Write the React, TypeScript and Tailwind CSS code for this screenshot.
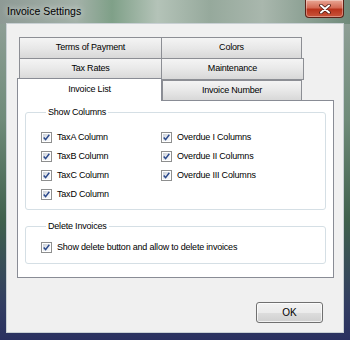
import React from "react";

const checkRowsLeft = ["TaxA Column", "TaxB Column", "TaxC Column", "TaxD Column"];
const checkRowsRight = ["Overdue I Columns", "Overdue II Columns", "Overdue III Columns"];

function Check() {
  return (
    <span className="flex w-[11px] h-[11px] shrink-0 border border-[#8e8f8f] bg-white p-px">
      <span className="flex flex-1 items-center justify-center bg-[linear-gradient(135deg,#c9ced6,#eef0f3_60%,#f8f8f8)]">
        <svg viewBox="0 0 7 7" className="w-[7px] h-[7px]">
          <path d="M0.7 3.5 L2.6 5.6 L6.3 0.8" fill="none" stroke="#2c4a8c" strokeWidth="1.5" />
        </svg>
      </span>
    </span>
  );
}

function CheckRow({ label }: { label: string }) {
  return (
    <div className="flex h-[19px] items-center gap-[5px]">
      <Check />
      <span>{label}</span>
    </div>
  );
}

function Tab({ label, className }: { label: string; className: string }) {
  return (
    <div
      className={
        "flex items-center justify-center border border-[#8c8e94] bg-[linear-gradient(#f4f4f4,#e8e8e8_50%,#d8d8d8)] " +
        className
      }
    >
      {label}
    </div>
  );
}

export default function App() {
  return (
    <div className="relative w-[350px] h-[340px] overflow-hidden bg-[linear-gradient(180deg,#95a39c_0%,#6f8b79_35%,#3f604c_65%,#323d62_90%,#2a3060_100%)] font-['Liberation_Sans',Arial,sans-serif] text-[9px] tracking-[-0.2px] text-black">
      {/* title bar */}
      <div className="flex h-[24px] items-center pl-[7px] bg-[linear-gradient(90deg,#8e9a95_0%,#a3b1a8_22%,#7fa088_32%,#b4c3b8_45%,#96a99c_60%,#a9b7ad_75%,#6f8a7a_100%)]">
        <span className="text-[10.5px] tracking-normal [text-shadow:0_0_6px_rgba(255,255,255,0.9)]">Invoice Settings</span>
      </div>
      <div className="absolute top-0 right-[6px] flex w-[39px] h-[18px] items-center justify-center rounded-b-[4px] border border-t-0 border-[#5b2016] bg-[linear-gradient(#e9a796_0%,#d46a55_45%,#b9331c_55%,#c9553b_100%)] shadow-[inset_0_0_0_1px_rgba(255,255,255,0.35)]">
        <svg viewBox="0 0 12 10" className="w-[12px] h-[10px]">
          <path d="M2 1.5 L10 8.5 M10 1.5 L2 8.5" stroke="#4a1a12" strokeWidth="3.6" strokeLinecap="round" />
          <path d="M2 1.5 L10 8.5 M10 1.5 L2 8.5" stroke="#ffffff" strokeWidth="2" strokeLinecap="round" />
        </svg>
      </div>

      {/* client area */}
      <div className="mx-[7px] flex h-[308px] flex-col bg-[#f0f0f0] pt-[13px] pl-[10px] shadow-[0_0_0_1px_#c9d0d4]">
        <div className="flex h-[22px] pl-[2px]">
          <Tab label="Terms of Payment" className="w-[143px]" />
          <Tab label="Colors" className="w-[141px] -ml-px" />
        </div>
        <div className="-mt-px flex h-[22px] pl-[2px]">
          <Tab label="Tax Rates" className="w-[143px]" />
          <Tab label="Maintenance" className="w-[143px] -ml-px" />
        </div>
        <div className="-mt-px flex h-[21px] items-start">
          <div className="relative z-10 -mt-px flex h-[23px] w-[145px] items-center justify-center border border-b-0 border-[#898c95] bg-white pb-[1px]">
            Invoice List
          </div>
          <Tab label="Invoice Number" className="mt-px h-[20px] w-[140px] border-b-0" />
        </div>

        <div className="w-[317px] h-[178px] border border-[#898c95] bg-white pl-[7px] pt-[5px]">
          <fieldset className="h-[104px] w-[301px] rounded-[3px] border border-[#d5dfe5] pl-[15px] pt-[9px]">
            <legend className="ml-[5px] px-[2px] leading-[13px]">Show Columns</legend>
            <div className="flex">
              <div className="flex w-[120px] flex-col">
                {checkRowsLeft.map((l) => (
                  <CheckRow key={l} label={l} />
                ))}
              </div>
              <div className="flex flex-col">
                {checkRowsRight.map((l) => (
                  <CheckRow key={l} label={l} />
                ))}
              </div>
            </div>
          </fieldset>
          <fieldset className="mt-[10px] h-[44px] w-[301px] rounded-[3px] border border-[#d5dfe5] pl-[15px] pt-[5px]">
            <legend className="ml-[5px] px-[2px] leading-[13px]">Delete Invoices</legend>
            <CheckRow label="Show delete button and allow to delete invoices" />
          </fieldset>
        </div>

        <div className="mt-[24px] flex justify-end pr-[20px]">
          <button className="flex h-[21px] w-[67px] items-center justify-center rounded-[3px] border border-[#707070] bg-[linear-gradient(#f2f2f2_0%,#ebebeb_50%,#dddddd_51%,#cfcfcf_100%)] text-[10px] tracking-normal shadow-[inset_0_0_0_1px_rgba(255,255,255,0.7)]">
            OK
          </button>
        </div>
      </div>
    </div>
  );
}
